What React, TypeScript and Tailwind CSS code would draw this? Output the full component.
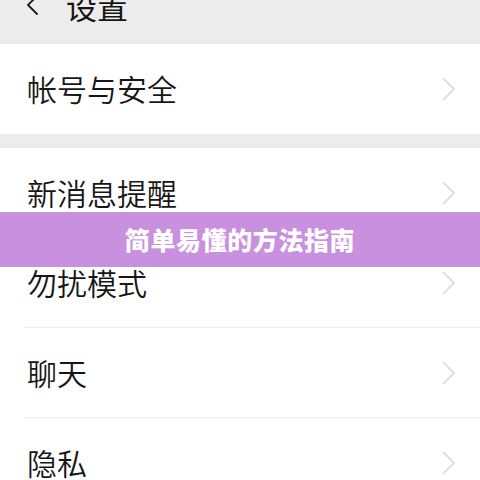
import React from "react";

const font = { fontFamily: '"Noto Sans CJK SC", "Noto Sans", sans-serif' };

function Chevron() {
  return (
    <svg width="14" height="24" viewBox="0 0 14 24" fill="none" className="shrink-0">
      <path d="M1.5 1.5 L12 12 L1.5 22.5" stroke="#d6d6d6" strokeWidth="1.5" strokeLinecap="round" strokeLinejoin="round" />
    </svg>
  );
}

function Row({ label, sep }: { label: string; sep?: boolean }) {
  return (
    <div className="relative h-[90px] flex items-center pl-[27px] pr-[24px] bg-white">
      <span className="flex-1 text-[30px] leading-none font-[350] text-[#161616] -mt-[2px]">{label}</span>
      <Chevron />
      {sep && <div className="absolute left-[24px] right-0 bottom-0 h-px bg-[#ededed]" />}
    </div>
  );
}

export default function App() {
  return (
    <div className="relative w-[480px] h-[480px] overflow-hidden bg-[#ececec]" style={font}>
      <div className="h-[44px] overflow-hidden bg-[#ececec]">
        <div className="flex items-center -mt-[12px] h-[34px] pl-[24px] gap-[26px]">
          <svg width="16" height="22" viewBox="0 0 16 22" fill="none">
            <path d="M13 2 L4 11 L13 20" stroke="#1b1b1b" strokeWidth="1.8" strokeLinecap="round" strokeLinejoin="round" />
          </svg>
          <span className="text-[31px] leading-none font-normal text-[#161616]">设置</span>
        </div>
      </div>
      <div className="bg-white">
        <Row label="帐号与安全" />
      </div>
      <div className="h-[14px]" />
      <div className="bg-white">
        <Row label="新消息提醒" sep />
        <Row label="勿扰模式" sep />
        <Row label="聊天" sep />
        <Row label="隐私" />
      </div>
      <div className="absolute left-0 right-0 top-[212px] h-[55px] bg-[#c990df] flex items-center justify-center">
        <span className="text-[25px] font-black text-white tracking-[0.6px] leading-none">简单易懂的方法指南</span>
      </div>
    </div>
  );
}
